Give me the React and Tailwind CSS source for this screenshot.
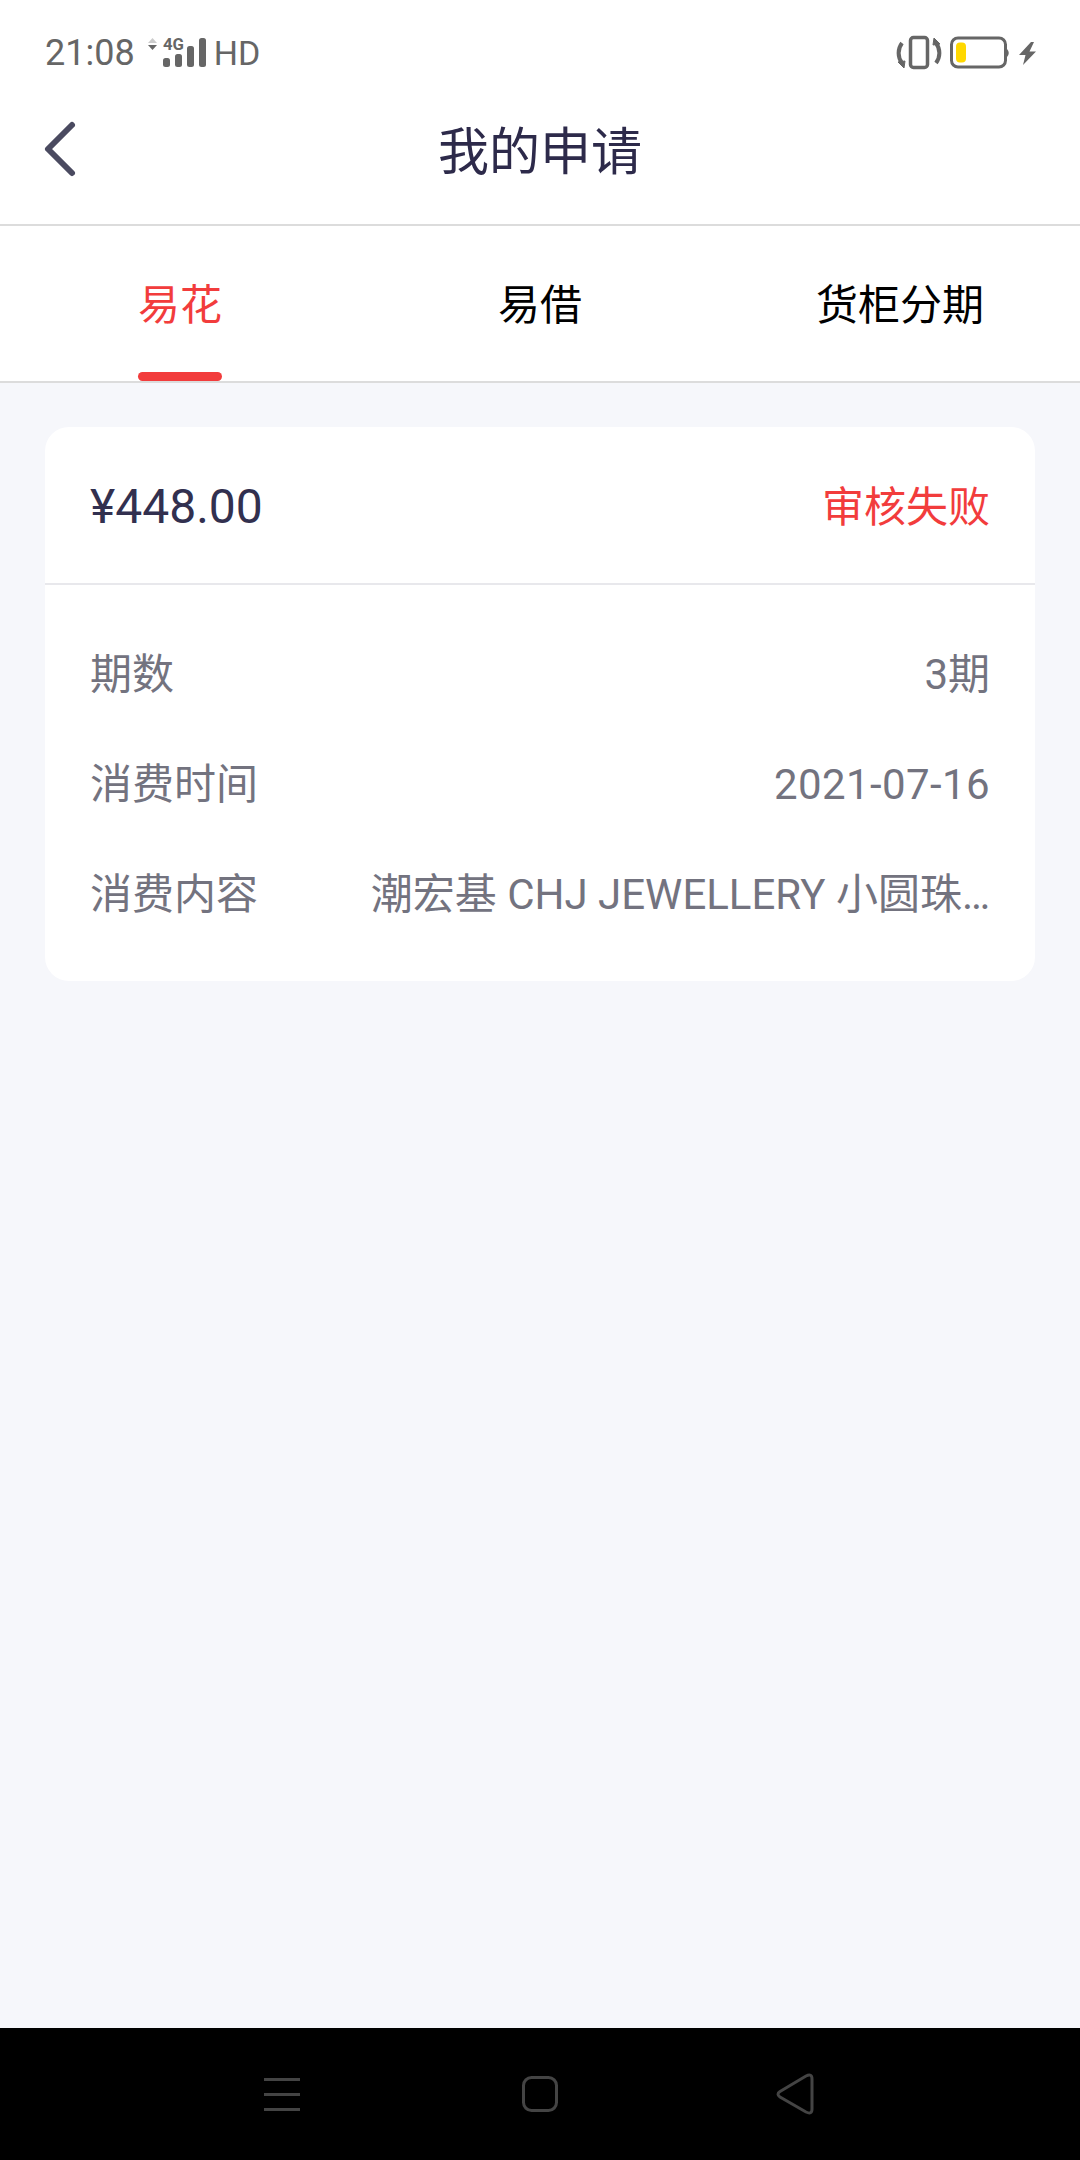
import React from "react";

const font = "font-['Roboto','Noto_Sans_CJK_SC',sans-serif]";

function StatusBar() {
  return (
    <div className="h-[90px] flex items-center justify-between pt-[16px] pl-[45px] pr-[44px] text-[#666666]">
      <div className="flex items-center">
        <span className="text-[36px] leading-[52px] font-[450]">21:08</span>
        <svg width="64" height="32" viewBox="0 0 64 32" className="ml-[10px] overflow-visible" fill="#666666">
          <path d="M3 6 L7.5 1 L12 6 Z" fill="#cccccc" />
          <path d="M3 8 H12 L7.5 13 Z" />
          <text x="18" y="13" fontSize="16" fontWeight="700" fontFamily="Roboto" textLength="21" lengthAdjust="spacingAndGlyphs">4G</text>
          <rect x="18" y="21" width="7" height="9" rx="2.5" />
          <rect x="30" y="17" width="7" height="13" rx="2.5" />
          <rect x="42" y="9" width="7" height="21" rx="2.5" />
          <rect x="54" y="1" width="7" height="29" rx="2.5" />
        </svg>
        <span className="text-[34px] leading-[52px] ml-[5px]">HD</span>
      </div>
      <div className="flex items-center">
        <svg width="46" height="36" viewBox="0 0 46 36" fill="none" stroke="#666666">
          <rect x="14.5" y="2.5" width="17" height="30" rx="3" strokeWidth="3.5" />
          <path d="M6 8 C1.5 14 1.5 22 6 28" strokeWidth="4" />
          <path d="M40 8 C44.5 14 44.5 22 40 28" strokeWidth="4" />
          <path d="M2 27 L8 33 L9 26 Z M44 9 L38 3 L37 10 Z" fill="#666666" strokeWidth="1" />
        </svg>
        <svg width="62" height="34" viewBox="0 0 62 34" fill="none" className="ml-[8px]">
          <rect x="1.5" y="2" width="54" height="29" rx="6.5" stroke="#666666" strokeWidth="3" />
          <rect x="6" y="6.5" width="10" height="20" rx="4" fill="#ffd800" />
          <path d="M57 13 Q60.5 17 57 21 Z" fill="#666666" />
        </svg>
        <svg width="17" height="23" viewBox="0 0 17 23" fill="#666666" className="ml-[7px]">
          <path d="M12 0 L0 13 H6.5 L4 23 L17 9.5 H10.5 L15 0 Z" />
        </svg>
      </div>
    </div>
  );
}

function Info({ label, value, valueClass = "" }) {
  return (
    <div className="flex items-center justify-between h-[110px] text-[42px] text-[#73737f]">
      <span className="shrink-0">{label}</span>
      <span className={valueClass}>{value}</span>
    </div>
  );
}

export default function App() {
  return (
    <div className={`w-[1080px] h-[2160px] flex flex-col bg-[#f6f7fb] ${font}`}>
      <div className="bg-white">
        <StatusBar />
        <div className="relative h-[136px] flex items-center justify-center pb-[8px] border-b-2 border-[#dcdcdc]">
          <svg width="40" height="60" viewBox="0 0 40 60" fill="none" className="absolute left-[40px] top-[29px]">
            <path d="M32 6 L8 30 L32 54" stroke="#4a4a60" strokeWidth="6" strokeLinecap="round" strokeLinejoin="round" />
          </svg>
          <span className="text-[51px] leading-[70px] text-[#2d2a4a]">我的申请</span>
        </div>
        <div className="h-[157px] flex border-b-2 border-[#dcdcdc] text-[42px] text-black">
          <div className="relative w-[360px] flex items-center justify-center text-[#f23c3c] pt-[4px]">
            易花
            <div className="absolute bottom-0 left-[138px] w-[84px] h-[9px] rounded-full bg-[#f23c3c]"></div>
          </div>
          <div className="w-[360px] flex items-center justify-center pt-[4px]">易借</div>
          <div className="w-[360px] flex items-center justify-center pt-[4px]">货柜分期</div>
        </div>
      </div>

      <div className="flex-1 px-[45px] pt-[44px]">
        <div className="bg-white rounded-[24px]">
          <div className="h-[158px] flex items-center justify-between pt-[4px] px-[45px] border-b-2 border-[#e8e8ec]">
            <span className="text-[48px] text-[#32304f]">¥448.00</span>
            <span className="text-[42px] text-[#f23c3c]">审核失败</span>
          </div>
          <div className="px-[45px] pt-[34px] pb-[32px]">
            <Info label="期数" value="3期" />
            <Info label="消费时间" value="2021-07-16" valueClass="tracking-[0.4px]" />
            <Info label="消费内容" value="潮宏基 CHJ JEWELLERY 小圆珠…" />
          </div>
        </div>
      </div>

      <div className="h-[132px] bg-black flex items-center">
        <svg width="1080" height="132" viewBox="0 0 1080 132" fill="none" stroke="#444444" strokeWidth="3">
          <path d="M264 51.5 H300 M264 66.5 H300 M264 81.5 H300" />
          <rect x="523.5" y="49.5" width="33" height="33" rx="8" />
          <path d="M780 63.5 L806 48 Q812 45 812 51 V81 Q812 87 806 84 L780 69 Q776 66 780 63.5 Z" />
        </svg>
      </div>
    </div>
  );
}
